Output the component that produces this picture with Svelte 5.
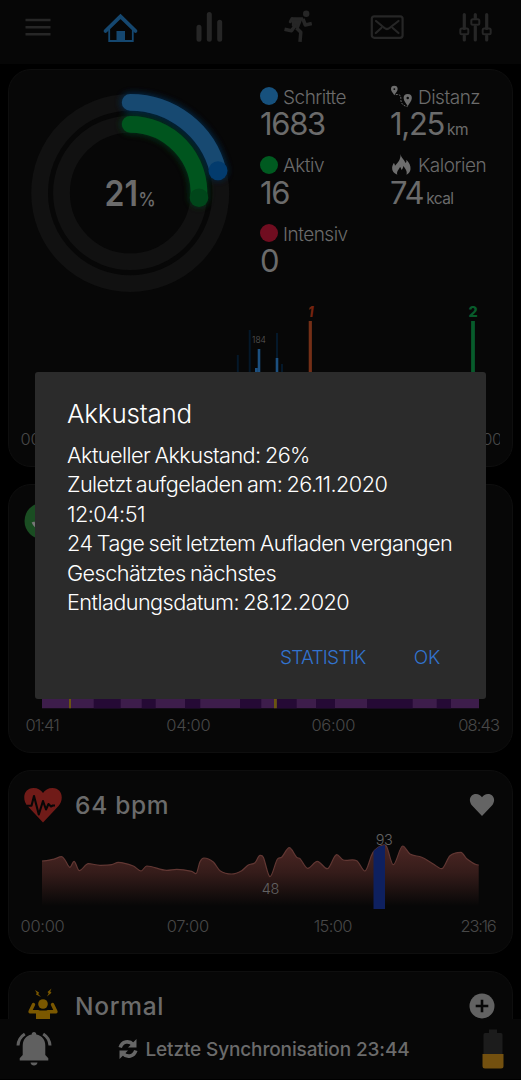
<script>
  const stats = [
    { label: "Schritte", value: "1683", color: "#17517d" },
    { label: "Distanz", value: "1,25", unit: "km", icon: "route" },
    { label: "Aktiv", value: "16", color: "#005a20" },
    { label: "Kalorien", value: "74", unit: "kcal", icon: "flame" },
    { label: "Intensiv", value: "0", color: "#700d20" },
  ];

  const dialogLines = [
    "Aktueller Akkustand: 26%",
    "Zuletzt aufgeladen am: 26.11.2020",
    "12:04:51",
    "24 Tage seit letztem Aufladen vergangen",
    "Geschätztes nächstes",
    "Entladungsdatum: 28.12.2020",
  ];

  // x, width of the deep sleep blocks
  const deepSleep = [
    [93.7, 27],
    [141.7, 14],
    [185, 15.3],
    [240, 21.3],
    [277, 19.7],
    [316, 19],
    [367, 45.7],
    [436.7, 14.3],
  ];

  const pulse = [
    [42, 861], [53.3, 859.3], [61.7, 856.7], [65, 860], [70, 867.3], [74, 861.3],
    [79.3, 870.7], [88.3, 863.7], [100, 865.3], [111.7, 864.7], [118.3, 862.3],
    [133.3, 866], [141, 871], [146.7, 866], [166.7, 870.3], [176.7, 869.3],
    [191.7, 871.3], [196, 873.7], [200, 861.7], [204, 858], [213.3, 862],
    [220, 870.7], [231.7, 874], [241.7, 870.7], [248.3, 865], [255, 862.7],
    [260, 855.3], [263.3, 857.3], [270, 876.7], [277.3, 859.3], [281.7, 857.3],
    [289.3, 847.7], [296.7, 857.3], [300, 858.7], [307.7, 868.3], [317.3, 861.3],
    [327.3, 868.7], [336.7, 854.7], [343.3, 860], [356.7, 860.7], [365, 871],
    [371.7, 855], [375, 850], [383.3, 845], [386.7, 846.7], [393.3, 864.7],
    [402.7, 846], [410, 854], [421.7, 857.3], [433.3, 864], [441.7, 868.7],
    [450, 855.7], [461, 852.3], [466.7, 858.7], [478.7, 865],
  ];

  function smooth(p) {
    let d = `M${p[0][0]} ${p[0][1]}`;
    for (let i = 0; i < p.length - 1; i++) {
      const a = p[i - 1] || p[i];
      const b = p[i];
      const c = p[i + 1];
      const e = p[i + 2] || c;
      // flat tangent on peaks and valleys
      const m1 = (b[1] - a[1]) * (c[1] - b[1]) <= 0 ? 0 : (c[1] - a[1]) / (c[0] - a[0]);
      const m2 = (c[1] - b[1]) * (e[1] - c[1]) <= 0 ? 0 : (e[1] - b[1]) / (e[0] - b[0]);
      const h = (c[0] - b[0]) / 3;
      d += `C${b[0] + h} ${b[1] + m1 * h} ${c[0] - h} ${c[1] - m2 * h} ${c[0]} ${c[1]}`;
    }
    return d;
  }

  const pulseLine = smooth(pulse);
</script>

<div class="app">
  <nav>
    <svg class="icon menu" viewBox="0 0 40 40">
      <path d="M7.5 13h25M7.5 20.300h25M7.500 27.300h25" stroke-width="2.600" />
    </svg>
    <svg class="icon home" viewBox="0 0 40 40">
      <path d="M5.500 24 20.500 9.300 35.500 24" stroke-width="3.800" stroke-linecap="round" />
      <path d="M9.200 22v12h23.600V22" stroke-width="1.800" />
      <path class="fill" d="M16.500 24h8.500v10.500h-8.500z" />
    </svg>
    <svg class="icon" viewBox="0 0 40 40">
      <path d="M10 20.300v12M20.300 7.500v24.800M30.700 15.300v17" stroke-width="5" stroke-linecap="round" />
    </svg>
    <svg class="icon" viewBox="0 0 40 40">
      <circle class="fill" cx="28.200" cy="6.800" r="3.200" />
      <path class="fill" d="M14 10.200 25 10.500 20.500 22 13.800 19z" />
      <path d="M25 12l2.300 6 6.500-1.500M18 17.500l-4.500 6.300-7-1.500M18.500 21l4.300 4.300-.8 9.500" stroke-width="3.500" stroke-linejoin="round" />
      <path d="M14 12.200 24 12M14 11.500l-1.700 3.300" stroke-width="3" stroke-linecap="round" />
    </svg>
    <svg class="icon" viewBox="0 0 40 40">
      <rect x="4.800" y="9.300" width="30.800" height="21.500" rx="2.500" stroke-width="2.200" />
      <path d="M9 14l8.500 7q2.500 2 5 0L31.500 14M8.800 26l5.500-5M31.500 26l-5.800-5" stroke-width="2.200" stroke-linecap="round" />
    </svg>
    <svg class="icon" viewBox="0 0 40 40">
      <path d="M9.300 7.500v14M9.300 29v4M20.300 7.500v4M20.300 19.500V33M31.700 7.500v14M31.700 29v4" stroke-width="3.200" stroke-linecap="round" />
      <rect x="5.300" y="21.600" width="8" height="5.600" rx="1.500" stroke-width="2" />
      <rect x="16.300" y="12.200" width="8" height="5.600" rx="1.500" stroke-width="2" />
      <rect x="27.700" y="21.600" width="8" height="5.600" rx="1.500" stroke-width="2" />
    </svg>
  </nav>

  <main>
    <section class="card activity">
      <div class="overview">
        <svg class="rings" viewBox="10 70 240 230">
          <defs>
            <filter id="glow" x="-30%" y="-30%" width="160%" height="160%">
              <feGaussianBlur stdDeviation="3" />
            </filter>
          </defs>
          <g fill="none" stroke="#111" stroke-width="16.800">
            <circle cx="130.200" cy="193" r="90.600" />
            <circle cx="130.200" cy="193" r="68.700" />
          </g>
          <g fill="none" stroke-linecap="round">
            <g filter="url(#glow)" stroke-width="19" opacity="0.800">
              <path d="M130.200 102.400A90.600 90.600 0 0 1 218 170.700" stroke="#06325c" />
              <path d="M130.200 124.300A68.700 68.700 0 0 1 198.800 197.500" stroke="#00401a" />
            </g>
            <path d="M130.200 102.400A90.600 90.600 0 0 1 218 170.700" stroke="#174971" stroke-width="16.800" />
            <path d="M130.200 124.300A68.700 68.700 0 0 1 198.800 197.500" stroke="#00551e" stroke-width="16.800" />
          </g>
          <circle cx="218" cy="170.800" r="9.500" fill="#033b6d" />
          <circle cx="199" cy="197.700" r="9.300" fill="#00461a" />
          <text class="percent" x="104.500" y="206" textLength="33.500" lengthAdjust="spacingAndGlyphs">21</text>
          <text class="sign" x="138.300" y="206" textLength="17.500" lengthAdjust="spacingAndGlyphs">%</text>
        </svg>
        <div class="stats">
          {#each stats as stat}
            <div class="stat">
              <div class="label">
                {#if stat.icon === "route"}
                  <svg class="glyph" viewBox="0 0 24 24">
                    <path fill="#6d6d6d" fill-rule="evenodd" d="M4.500.8a3.500 3.500 0 0 1 3.500 3.500C8 6.800 5.500 8.800 4.500 10.800 3.500 8.800 1 6.800 1 4.300A3.500 3.500 0 0 1 4.500.8M4.500 3.300a1 1 0 1 0 0 2 1 1 0 0 0 0-2M18.500 9.300a4.300 4.300 0 0 1 4.300 4.300c0 3.200-3 5.700-4.300 8.700-1.300-3-4.300-5.500-4.300-8.700a4.300 4.300 0 0 1 4.300-4.300m0 3a1.300 1.300 0 1 0 0 2.600 1.300 1.300 0 0 0 0-2.600" />
                    <path fill="none" stroke="#6d6d6d" stroke-width="1" stroke-dasharray="2 1.200" d="M6 10c4-.5 5.500 1 5.300 4-.2 4 1 7.500 7 8.500" />
                  </svg>
                {:else if stat.icon === "flame"}
                  <svg class="glyph" viewBox="0 0 24 24">
                    <path fill="#6d6d6d" d="M11 1c.5 4 3.700 5.500 5.300 9.500.8-.8 1-2 .8-3.500 3 3 4.700 6.500 4.300 10-.3 2.700-1.800 4.500-4.200 5.700 1-3.500-.8-6-3.400-9.200 0 2-.7 3.200-1.800 4.200-.5-1.300-.7-2.200-1.500-3-1.500 3-4 5-2.800 8C4 21.500 2 19 2.200 15.500c.1-2 .9-3.500 1.800-5 .8.700 1 1.700 1.200 2.700C8.500 10 11.200 6.500 11 1z" />
                  </svg>
                {:else}
                  <span class="dot" style="background: {stat.color}"></span>
                {/if}
                <span class="name">{stat.label}</span>
              </div>
              <div class="value">
                {stat.value}{#if stat.unit}<small>{stat.unit}</small>{/if}
              </div>
            </div>
          {/each}
        </div>
      </div>
      <svg class="steps" viewBox="21 300 479 155">
        <path d="M237.800 355v60M249.700 330v80M277 333v80M282 364v40" stroke="#04182a" stroke-width="2" />
        <path d="M256.300 368v70M259 349v90M277 358v80" stroke="#1c5080" stroke-width="2.600" />
        <path d="M310.300 321v110" stroke="#742f17" stroke-width="3.200" />
        <path d="M473 321v110" stroke="#075b2b" stroke-width="3.800" />
        <text class="marker first" x="308" y="317.300" textLength="5.500" lengthAdjust="spacingAndGlyphs">1</text>
        <text class="marker" x="473" y="317.300">2</text>
        <text class="peak" x="259" y="343.300">184</text>
        <text class="axis" x="42.500" y="445">00:00</text>
        <text class="axis" x="480" y="445">00:00</text>
      </svg>
    </section>

    <section class="card sleep">
      <div class="sleep-head">
        <svg viewBox="0 0 38 38">
          <circle cx="19" cy="19" r="18.500" fill="#1a4d22" />
          <path d="M9 20q3 7 9 5" fill="none" stroke="#777" stroke-width="3" />
        </svg>
      </div>
      <svg class="phases" viewBox="21 690 479 50">
        <path d="M42 690h437v18.300H42z" fill="#3d1d4b" />
        {#each deepSleep as [x, width]}
          <rect {x} y="690" {width} height="18.300" fill="#250a35" />
        {/each}
        <path d="M69 690h2v18.300h-2zM274 690h2.800v18.300H274z" fill="#6a5510" />
        <text class="axis" x="42.500" y="731.300" textLength="34">01:41</text>
        <text class="axis" x="188.300" y="731.300">04:00</text>
        <text class="axis" x="333.300" y="731.300">06:00</text>
        <text class="axis" x="479" y="731.300" textLength="41.500">08:43</text>
      </svg>
    </section>

    <section class="card heart">
      <header>
        <svg class="badge" viewBox="0 0 40 36">
          <path fill="#701b18" d="M20 35.500 4.500 19C-1.500 12 1 1 10.500 1 15 1 18 3 20 6c2-3 5-5 9.500-5C39 1 41.500 12 35.500 19z" />
          <path fill="none" stroke="#070707" stroke-width="2.100" stroke-linejoin="round" d="M4 18.800h4.500L11 9l4.800 18.500L20 14l3 8.500 2.500-5.500 2.500 2.500 1.800-1H32" />
        </svg>
        <h2>64 bpm</h2>
        <svg class="action" viewBox="0 0 26 26">
          <path fill="#646464" d="M13 24 2.800 13.300C-1.200 8 1.500 2 7 2c2.800 0 4.700 1.300 6 3.300C14.300 3.300 16.200 2 19 2c5.500 0 8.200 6 4.200 11.300z" />
        </svg>
      </header>
      <svg class="pulse" viewBox="21 830 479 110">
        <defs>
          <linearGradient id="fade" gradientUnits="userSpaceOnUse" x1="0" y1="845" x2="0" y2="906">
            <stop offset="0" stop-color="#4d2724" />
            <stop offset="0.450" stop-color="#351c1a" />
            <stop offset="1" stop-color="#070707" />
          </linearGradient>
        </defs>
        <path d="{pulseLine}V908H42z" fill="url(#fade)" />
        <path d={pulseLine} fill="none" stroke="#613733" stroke-width="1.200" />
        <path d="M373.500 851 379 846.500 385 845v64h-11.500z" fill="#0e205f" />
        <text class="reading" x="384" y="844.700">93</text>
        <text class="reading" x="270.300" y="894.300">48</text>
        <text class="axis" x="42.500" y="932">00:00</text>
        <text class="axis" x="187.800" y="932">07:00</text>
        <text class="axis" x="333" y="932" textLength="38.500">15:00</text>
        <text class="axis" x="478.500" y="932" textLength="36">23:16</text>
      </svg>
    </section>

    <section class="card stress">
      <header>
        <svg class="badge" viewBox="0 0 40 36">
          <g fill="#7b5800">
            <circle cx="20" cy="16" r="4.800" />
            <path d="M13 22.500h14v14H13z" />
            <path d="m12 2 4 2.500-.7 1.700L18 9l-5-2.500.7-1.500zM28.500.5 24.500 4l1.200 1.300L24 8.500l4.500-3.700-1.300-1.200z" />
          </g>
          <path d="m10.500 16.500-3.500 7.300H15M29.500 16.500l3.500 7.300H25" fill="none" stroke="#7b5800" stroke-width="3.400" stroke-linecap="round" stroke-linejoin="round" />
        </svg>
        <h2>Normal</h2>
        <svg class="action" viewBox="0 0 26 26">
          <circle cx="13" cy="13" r="12.500" fill="#626262" />
          <path d="M6.700 13h12.600M13 6.700v12.600" stroke="#070707" stroke-width="2.600" />
        </svg>
      </header>
    </section>
  </main>

  <footer>
    <svg class="bell" viewBox="0 0 36 36">
      <path fill="#606060" d="M18 1c1.500 0 2.300 1 2.300 2.500 6 1.200 9 5.500 9 11.500v9l3 3.300V29.500H3.700v-2.200l3-3.300v-9c0-6 3-10.300 9-11.500C15.700 2 16.500 1 18 1zM14.500 31.500h7c-.3 4-6.700 4-7 0z" />
      <path fill="none" stroke="#606060" stroke-width="3" d="M8.800 3Q2.500 7 2 14.500M27.200 3q6.300 4 6.800 11.500" />
    </svg>
    <div class="sync">
      <svg viewBox="0 0 20 22">
        <path fill="none" stroke="#676767" stroke-width="3.600" d="M2.200 9.500C4 3.500 11 2 15 6.500M17.800 12.500C16 18.500 9 20 5 15.500" />
        <path fill="#676767" d="M18.500 1v8.500H10zM1.500 21v-8.500H10z" />
      </svg>
      <span>Letzte Synchronisation 23:44</span>
    </div>
    <svg class="battery" viewBox="0 0 22 40">
      <path fill="#1c1c1c" d="M7 .5h8V4h4q1.500 0 1.500 1.500V26h-19V5.500Q1.500 4 3 4h4z" />
      <path fill="#73500f" d="M.5 25h21v12q0 2.500-2.500 2.500H3Q.5 39.500.5 37z" />
    </svg>
  </footer>

  <div class="dialog" role="dialog">
    <h1>Akkustand</h1>
    {#each dialogLines as line}
      <p>{line}</p>
    {/each}
    <div class="buttons">
      <button>STATISTIK</button>
      <button class="ok">OK</button>
    </div>
  </div>
</div>

<style>
  :global(body) {
    background: #000;
  }

  .app {
    position: relative;
    display: flex;
    flex-direction: column;
    width: 521px;
    height: 1080px;
    overflow: hidden;
    font-family: Inter, "Liberation Sans", sans-serif;
    font-weight: 300;
    color: #6b6b6b;
  }

  svg {
    display: block;
    flex: none;
  }

  nav {
    flex: none;
    display: flex;
    gap: 48.850px;
    box-sizing: border-box;
    height: 64px;
    padding: 7px 0 0 18px;
    background: #060606;
  }

  .icon {
    width: 40px;
    height: 40px;
    fill: none;
    stroke: #262626;
  }

  .menu {
    margin-right: -6.850px;
  }

  .icon .fill {
    fill: #262626;
    stroke: none;
  }

  .home {
    stroke: #15476f;
  }

  .home .fill {
    fill: #15476f;
  }

  main {
    flex: 1;
    min-height: 0;
    display: flex;
    flex-direction: column;
    gap: 17px;
    padding: 5px 8px 0;
    overflow: hidden;
  }

  .card {
    flex: none;
    box-sizing: border-box;
    border: 1px solid #0e0e0e;
    border-radius: 23px;
    background: #070707;
  }

  .activity {
    height: 398px;
  }

  .overview {
    display: flex;
    height: 230px;
  }

  .rings {
    width: 240px;
    height: 230px;
    margin-left: 1px;
  }

  .percent {
    font-size: 36px;
    font-weight: 600;
    fill: #6b6b6b;
  }

  .sign {
    font-size: 19px;
    font-weight: 500;
    fill: #6b6b6b;
  }

  .stats {
    display: grid;
    grid-template-columns: 130px 110px;
    grid-auto-rows: 68.500px;
    margin: 14px 0 0 10px;
  }

  .label {
    display: flex;
    align-items: center;
    gap: 5px;
    height: 24px;
    font-size: 19px;
    letter-spacing: -0.500px;
  }

  .name {
    padding-top: 2px;
  }

  .dot {
    width: 18px;
    height: 18px;
    border-radius: 50%;
  }

  .glyph {
    width: 23px;
    height: 23px;
  }

  .value {
    font-size: 31px;
    font-weight: 400;
    line-height: 32px;
    letter-spacing: -1.300px;
  }

  .value small {
    margin-left: 3px;
    font-size: 15.500px;
    letter-spacing: -0.600px;
  }

  .steps {
    width: 479px;
    height: 155px;
    margin-left: 12px;
  }

  .axis,
  .marker,
  .peak,
  .reading {
    text-anchor: middle;
    fill: #484848;
  }

  .axis {
    font-size: 16.500px;
    letter-spacing: -0.300px;
  }

  .reading {
    font-size: 14.500px;
    letter-spacing: -0.500px;
    fill: #626262;
  }

  .peak {
    font-size: 8.500px;
    fill: #5a5a5a;
  }

  .marker {
    font-size: 14.500px;
    font-weight: 800;
    fill: #075b2b;
  }

  .first {
    text-anchor: start;
    font-style: italic;
    fill: #74240f;
  }

  .sleep {
    height: 269px;
    padding-top: 17px;
  }

  .sleep-head {
    height: 188px;
    padding-left: 15px;
  }

  .sleep-head svg {
    width: 38px;
    height: 38px;
  }

  .phases {
    width: 479px;
    height: 50px;
    margin-left: 12px;
  }

  .heart {
    height: 184px;
  }

  header {
    display: flex;
    align-items: center;
    height: 59px;
    padding: 9px 17px 0 14px;
    box-sizing: border-box;
  }

  .badge {
    width: 40px;
    height: 36px;
  }

  h2 {
    flex: 1;
    margin: 0 0 0 12px;
    font-size: 24.500px;
    font-weight: 500;
    letter-spacing: 0.700px;
  }

  .action {
    width: 26px;
    height: 26px;
  }

  .pulse {
    width: 479px;
    height: 110px;
    margin-left: 12px;
  }

  .stress {
    height: 184px;
  }

  footer {
    flex: none;
    display: flex;
    align-items: center;
    justify-content: space-between;
    box-sizing: border-box;
    height: 60px;
    margin-bottom: 1px;
    padding: 0 17px 0 16px;
    background: #070707;
  }

  .bell {
    width: 36px;
    height: 36px;
  }

  .sync {
    display: flex;
    align-items: center;
    gap: 7px;
    margin-right: 6px;
    font-size: 19px;
    font-weight: 500;
    letter-spacing: -0.130px;
  }

  .sync svg {
    width: 20px;
    height: 22px;
  }

  .battery {
    width: 22px;
    height: 40px;
  }

  /* battery dialog over the dimmed dashboard */
  .dialog {
    position: absolute;
    left: 35px;
    top: 372px;
    width: 451px;
    height: 327px;
    box-sizing: border-box;
    padding: 26px 32px 0;
    border-radius: 3px;
    background: #2b2b2b;
    color: #fff;
  }

  h1 {
    margin: 0 0 12px;
    font-size: 26px;
    font-weight: 300;
    line-height: 31px;
    letter-spacing: -0.200px;
  }

  p {
    margin: 0;
    font-size: 21.700px;
    line-height: 29.400px;
    letter-spacing: -0.580px;
    word-spacing: -1.200px;
    white-space: nowrap;
  }

  .buttons {
    display: flex;
    justify-content: flex-end;
    gap: 48px;
    margin: 29px 14px 0 0;
  }

  button {
    padding: 0;
    border: 0;
    background: none;
    color: #3273cf;
    font: inherit;
    font-size: 19px;
    line-height: 24px;
    letter-spacing: -0.700px;
  }

  .ok {
    letter-spacing: -0.200px;
  }
</style>
